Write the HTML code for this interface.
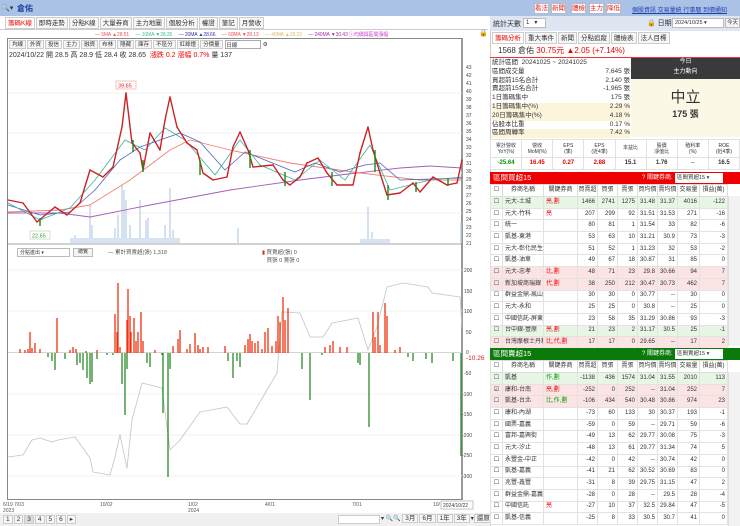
<!DOCTYPE html>
<html><head><meta charset="utf-8"><style>
*{box-sizing:border-box;margin:0;padding:0}
body{width:740px;height:526px;overflow:hidden;background:#fff;font-family:"Liberation Sans","Noto Sans CJK TC",sans-serif;font-size:7px;color:#333;position:relative}
.a{position:absolute}
.btn{position:absolute;border:1px solid #bbb;background:#f4f4f4;font-size:6.5px;text-align:center;line-height:9px;height:11px;white-space:nowrap;overflow:hidden}
.tab{display:inline-block;border:1px solid #ccc;background:#f6f6f6;padding:0 2px;height:12px;line-height:11px;font-size:6.5px;margin-right:1px}
table{border-collapse:collapse;table-layout:fixed}
td{border:1px solid #e2e2e2;font-size:6px;height:11.7px;line-height:9px;padding:0 2px;white-space:nowrap;overflow:hidden;text-align:right}
td.n,td.k{text-align:left}
td.c{text-align:center}
tr.g td{background:#e8f6e6}tr.p td{background:#fde4e4}
th{border:1px solid #ddd;font-size:6px;font-weight:normal;height:12px;line-height:9px;background:#fff;overflow:hidden;white-space:nowrap}
.r{color:#e00}.gr{color:#090}
</style></head><body>
<div class="a" style="left:0;top:0;width:490px;height:16px;background:#a9c2e6"></div>
<div class="a" style="left:1px;top:4px;font-size:7px">🔍▾</div>
<div class="a" style="left:17px;top:3px;font-size:8px;color:#1c3fa0;font-weight:bold">倉佑</div>
<div class="a" style="left:5px;top:17px;white-space:nowrap"><span class="tab" style="color:#e00;background:#fff">籌碼K線</span><span class="tab">即時走勢</span><span class="tab">分點K線</span><span class="tab">大量券商</span><span class="tab">主力地圖</span><span class="tab">個股分析</span><span class="tab">權證</span><span class="tab">筆記</span><span class="tab">月營收</span></div>
<div class="a" style="left:0;top:29px;width:488px;height:1px;background:#ccc"></div>
<div class="a" style="left:95px;top:31px;font-size:5px;white-space:nowrap;letter-spacing:-.1px"><span style="color:#e55">— 5MA ▲28.51</span>&nbsp;&nbsp;&nbsp;&nbsp;&nbsp;<span style="color:#4b9">— 10MA ▼28.35</span>&nbsp;&nbsp;&nbsp;&nbsp;&nbsp;<span style="color:#33a">— 20MA ▲28.66</span>&nbsp;&nbsp;&nbsp;&nbsp;&nbsp;<span style="color:#e55">— 60MA ▼28.13</span>&nbsp;&nbsp;&nbsp;&nbsp;&nbsp;<span style="color:#db6">— 40MA ▲28.23</span>&nbsp;&nbsp;&nbsp;&nbsp;&nbsp;<span style="color:#a3a">— 240MA ▼30.43</span> <span style="color:#c3c">ⓘ均價與區間漲幅</span></div>
<div class="a" style="left:479px;top:29px;font-size:7px">🔒</div>
<div class="a" style="left:7px;top:38px;width:456px;height:462px;border:1px solid #888;border-right:2px solid #999"></div>
<div class="a" style="left:9px;top:40px;white-space:nowrap;font-size:5.5px"><span class="tab" style="height:9px;line-height:8px;font-size:5.5px">均線</span><span class="tab" style="height:9px;line-height:8px;font-size:5.5px">外資</span><span class="tab" style="height:9px;line-height:8px;font-size:5.5px">投信</span><span class="tab" style="height:9px;line-height:8px;font-size:5.5px">主力</span><span class="tab" style="height:9px;line-height:8px;font-size:5.5px">融資</span><span class="tab" style="height:9px;line-height:8px;font-size:5.5px">布林</span><span class="tab" style="height:9px;line-height:8px;font-size:5.5px">隱藏</span><span class="tab" style="height:9px;line-height:8px;font-size:5.5px">庫存</span><span class="tab" style="height:9px;line-height:8px;font-size:5.5px">不區分</span><span class="tab" style="height:9px;line-height:8px;font-size:5.5px">紅綠燈</span><span class="tab" style="height:9px;line-height:8px;font-size:5.5px">分價量</span> <span style="display:inline-block;border:1px solid #aaa;width:36px;height:9px;vertical-align:top">日線</span> ⚙</div>
<div class="a" style="left:9px;top:50px;font-size:7px;white-space:nowrap">2024/10/22 開 28.5 高 28.9 低 28.4 收 28.65 &nbsp;<span class="r">漲跌 0.2 漲幅 0.7%</span> 量 137</div>
<svg class="a" style="left:0;top:0" width="490" height="526">
<g stroke="#f0f0f0" stroke-width="1"><line x1="8" y1="93" x2="462" y2="93"/><line x1="8" y1="133" x2="462" y2="133"/><line x1="8" y1="173" x2="462" y2="173"/><line x1="8" y1="213" x2="462" y2="213"/><line x1="8" y1="270" x2="462" y2="270"/><line x1="8" y1="311" x2="462" y2="311"/><line x1="8" y1="394" x2="462" y2="394"/><line x1="8" y1="435" x2="462" y2="435"/><line x1="8" y1="476" x2="462" y2="476"/></g>
<g stroke="#b8cde6" stroke-width="1.2">
<line x1="75" y1="243" x2="75" y2="235"/><line x1="90" y1="243" x2="90" y2="205"/><line x1="92" y1="243" x2="92" y2="225"/><line x1="115" y1="243" x2="115" y2="228"/><line x1="118" y1="243" x2="118" y2="215"/><line x1="122" y1="243" x2="122" y2="185"/><line x1="124" y1="243" x2="124" y2="190"/><line x1="126" y1="243" x2="126" y2="200"/><line x1="130" y1="243" x2="130" y2="225"/><line x1="140" y1="243" x2="140" y2="200"/><line x1="146" y1="243" x2="146" y2="220"/><line x1="148" y1="243" x2="148" y2="218"/><line x1="165" y1="243" x2="165" y2="225"/><line x1="170" y1="243" x2="170" y2="188"/><line x1="173" y1="243" x2="173" y2="230"/><line x1="238" y1="243" x2="238" y2="228"/><line x1="368" y1="243" x2="368" y2="207"/><line x1="372" y1="243" x2="372" y2="232"/><line x1="461" y1="243" x2="461" y2="222"/>
</g>
<rect x="70" y="238" width="110" height="5" fill="#d6e3f2"/><rect x="360" y="239" width="30" height="4" fill="#d6e3f2"/>
<g stroke="#a35fb8" stroke-width="0.9" stroke-linecap="round">
<line x1="8" y1="213" x2="60" y2="213"/><line x1="60" y1="213" x2="90" y2="217"/><line x1="90" y1="217" x2="150" y2="205"/><line x1="150" y1="205" x2="230" y2="190"/><line x1="230" y1="190" x2="300" y2="180"/><line x1="300" y1="180" x2="340" y2="175"/><line x1="340" y1="175" x2="400" y2="168"/><line x1="400" y1="168" x2="430" y2="166"/><line x1="430" y1="166" x2="462" y2="168"/>
</g>
<g stroke="#f08070" stroke-width="0.9" stroke-linecap="round">
<line x1="8" y1="212" x2="60" y2="210"/><line x1="60" y1="210" x2="90" y2="205"/><line x1="90" y1="205" x2="130" y2="180"/><line x1="130" y1="180" x2="170" y2="150"/><line x1="170" y1="150" x2="190" y2="140"/><line x1="190" y1="140" x2="230" y2="150"/><line x1="230" y1="150" x2="290" y2="163"/><line x1="290" y1="163" x2="360" y2="173"/><line x1="360" y1="173" x2="420" y2="180"/><line x1="420" y1="180" x2="462" y2="180"/>
</g>
<g stroke="#5060c0" stroke-width="0.8" stroke-linecap="round">
<line x1="8" y1="205" x2="40" y2="215"/><line x1="40" y1="215" x2="70" y2="212"/><line x1="70" y1="212" x2="95" y2="190"/><line x1="95" y1="190" x2="120" y2="160"/><line x1="120" y1="160" x2="140" y2="147"/><line x1="140" y1="147" x2="160" y2="140"/><line x1="160" y1="140" x2="180" y2="133"/><line x1="180" y1="133" x2="200" y2="142"/><line x1="200" y1="142" x2="225" y2="170"/><line x1="225" y1="170" x2="245" y2="152"/><line x1="245" y1="152" x2="270" y2="162"/><line x1="270" y1="162" x2="295" y2="172"/><line x1="295" y1="172" x2="315" y2="163"/><line x1="315" y1="163" x2="340" y2="172"/><line x1="340" y1="172" x2="365" y2="165"/><line x1="365" y1="165" x2="380" y2="163"/><line x1="380" y1="163" x2="400" y2="180"/><line x1="400" y1="180" x2="462" y2="178"/>
</g>
<g stroke="#40b0a0" stroke-width="0.8" stroke-linecap="round">
<line x1="8" y1="203" x2="40" y2="220"/><line x1="40" y1="220" x2="70" y2="208"/><line x1="70" y1="208" x2="95" y2="180"/><line x1="95" y1="180" x2="125" y2="140"/><line x1="125" y1="140" x2="145" y2="150"/><line x1="145" y1="150" x2="165" y2="128"/><line x1="165" y1="128" x2="185" y2="140"/><line x1="185" y1="140" x2="215" y2="175"/><line x1="215" y1="175" x2="240" y2="140"/><line x1="240" y1="140" x2="260" y2="165"/><line x1="260" y1="165" x2="295" y2="180"/><line x1="295" y1="180" x2="320" y2="160"/><line x1="320" y1="160" x2="345" y2="180"/><line x1="345" y1="180" x2="370" y2="145"/><line x1="370" y1="145" x2="390" y2="190"/><line x1="390" y1="190" x2="430" y2="180"/><line x1="430" y1="180" x2="462" y2="177"/>
</g>
<g stroke="#c22" stroke-width="1.4" stroke-linecap="round">
<line x1="8" y1="200" x2="23" y2="203"/><line x1="23" y1="203" x2="37" y2="222"/><line x1="37" y1="222" x2="55" y2="207"/><line x1="55" y1="207" x2="67" y2="215"/><line x1="67" y1="215" x2="80" y2="203"/><line x1="80" y1="203" x2="90" y2="170"/><line x1="90" y1="170" x2="103" y2="177"/><line x1="103" y1="177" x2="113" y2="167"/><line x1="113" y1="167" x2="122" y2="127"/><line x1="122" y1="127" x2="126" y2="93"/><line x1="126" y1="93" x2="132" y2="143"/><line x1="132" y1="143" x2="140" y2="153"/><line x1="140" y1="153" x2="143" y2="170"/><line x1="143" y1="170" x2="150" y2="133"/><line x1="150" y1="133" x2="160" y2="150"/><line x1="160" y1="150" x2="165" y2="120"/><line x1="165" y1="120" x2="170" y2="97"/><line x1="170" y1="97" x2="177" y2="127"/><line x1="177" y1="127" x2="187" y2="143"/><line x1="187" y1="143" x2="197" y2="150"/><line x1="197" y1="150" x2="203" y2="173"/><line x1="203" y1="173" x2="213" y2="180"/><line x1="213" y1="180" x2="227" y2="177"/><line x1="227" y1="177" x2="233" y2="147"/><line x1="233" y1="147" x2="240" y2="132"/><line x1="240" y1="132" x2="248" y2="150"/><line x1="248" y1="150" x2="253" y2="167"/><line x1="253" y1="167" x2="273" y2="165"/><line x1="273" y1="165" x2="283" y2="180"/><line x1="283" y1="180" x2="290" y2="185"/><line x1="290" y1="185" x2="300" y2="177"/><line x1="300" y1="177" x2="307" y2="163"/><line x1="307" y1="163" x2="318" y2="158"/><line x1="318" y1="158" x2="327" y2="173"/><line x1="327" y1="173" x2="337" y2="185"/><line x1="337" y1="185" x2="353" y2="185"/><line x1="353" y1="185" x2="360" y2="153"/><line x1="360" y1="153" x2="368" y2="127"/><line x1="368" y1="127" x2="373" y2="150"/><line x1="373" y1="150" x2="380" y2="173"/><line x1="380" y1="173" x2="387" y2="195"/><line x1="387" y1="195" x2="400" y2="193"/><line x1="400" y1="193" x2="413" y2="183"/><line x1="413" y1="183" x2="420" y2="192"/><line x1="420" y1="192" x2="433" y2="177"/><line x1="433" y1="177" x2="447" y2="185"/><line x1="447" y1="185" x2="457" y2="183"/><line x1="457" y1="183" x2="462" y2="160"/>
</g>
<g stroke="#1a8a1a" stroke-width="1.4">
<line x1="40" y1="218" x2="40" y2="226"/><line x1="133" y1="140" x2="133" y2="152"/><line x1="143" y1="160" x2="143" y2="172"/><line x1="200" y1="160" x2="200" y2="175"/><line x1="250" y1="150" x2="250" y2="168"/><line x1="285" y1="172" x2="285" y2="186"/><line x1="332" y1="172" x2="332" y2="186"/><line x1="375" y1="150" x2="375" y2="172"/><line x1="388" y1="185" x2="388" y2="200"/><line x1="416" y1="182" x2="416" y2="192"/><line x1="448" y1="178" x2="448" y2="186"/>
</g>
<rect x="116" y="81" width="20" height="8" fill="#fff" stroke="#e88" stroke-width=".5"/><text x="118" y="87.5" font-size="5.5" fill="#e22">39.85</text>
<rect x="30" y="231" width="20" height="8" fill="#fff" stroke="#9c9" stroke-width=".5"/><text x="32" y="237.5" font-size="5.5" fill="#393">22.65</text>
<g font-size="5" fill="#444">
<text x="466" y="69">43</text><text x="466" y="77">42</text><text x="466" y="85">41</text><text x="466" y="93">40</text><text x="466" y="101">39</text><text x="466" y="109">38</text><text x="466" y="117">37</text><text x="466" y="125">36</text><text x="466" y="133">35</text><text x="466" y="141">34</text><text x="466" y="149">33</text><text x="466" y="157">32</text><text x="466" y="165">31</text><text x="466" y="173">30</text><text x="466" y="181">29</text><text x="466" y="189">28</text><text x="466" y="197">27</text><text x="466" y="205">26</text><text x="466" y="213">25</text><text x="466" y="221">24</text><text x="466" y="229">23</text><text x="466" y="237">22</text><text x="466" y="245">21</text>
<text x="464" y="272">200</text><text x="464" y="293">150</text><text x="464" y="313">100</text><text x="466" y="334">50</text><text x="466" y="354">0</text><text x="464" y="375">-50</text><text x="462" y="396">-100</text><text x="462" y="416">-150</text><text x="462" y="437">-200</text><text x="462" y="457">-250</text><text x="462" y="478">-300</text>
</g>
<text x="466" y="360" font-size="6.5" fill="#c22">-10.26</text>
<line x1="8" y1="244" x2="462" y2="244" stroke="#888" stroke-width=".8"/>
<line x1="8" y1="352.7" x2="462" y2="352.7" stroke="#bbb" stroke-width=".6"/>
<g stroke="#c4c4c4" stroke-width="0.8" stroke-linecap="round">
<line x1="8" y1="457" x2="23" y2="455"/><line x1="23" y1="455" x2="32" y2="440"/><line x1="32" y1="440" x2="40" y2="438"/><line x1="40" y1="438" x2="52" y2="442"/><line x1="52" y1="442" x2="58" y2="440"/><line x1="58" y1="440" x2="75" y2="437"/><line x1="75" y1="437" x2="90" y2="458"/><line x1="90" y1="458" x2="93" y2="472"/><line x1="93" y1="472" x2="110" y2="475"/><line x1="110" y1="475" x2="115" y2="457"/><line x1="115" y1="457" x2="120" y2="435"/><line x1="120" y1="435" x2="127" y2="468"/><line x1="127" y1="468" x2="132" y2="420"/><line x1="132" y1="420" x2="142" y2="383"/><line x1="142" y1="383" x2="162" y2="388"/><line x1="162" y1="388" x2="170" y2="450"/><line x1="170" y1="450" x2="180" y2="440"/><line x1="180" y1="440" x2="200" y2="412"/><line x1="200" y1="412" x2="227" y2="407"/><line x1="227" y1="407" x2="240" y2="424"/><line x1="240" y1="424" x2="247" y2="424"/><line x1="247" y1="424" x2="267" y2="390"/><line x1="267" y1="390" x2="277" y2="373"/><line x1="277" y1="373" x2="282" y2="312"/><line x1="282" y1="312" x2="300" y2="313"/><line x1="300" y1="313" x2="310" y2="337"/><line x1="310" y1="337" x2="323" y2="337"/><line x1="323" y1="337" x2="332" y2="323"/><line x1="332" y1="323" x2="358" y2="318"/><line x1="358" y1="318" x2="368" y2="350"/><line x1="368" y1="350" x2="377" y2="327"/><line x1="377" y1="327" x2="387" y2="287"/><line x1="387" y1="287" x2="403" y2="283"/><line x1="403" y1="283" x2="428" y2="287"/><line x1="428" y1="287" x2="432" y2="293"/><line x1="432" y1="293" x2="460" y2="297"/><line x1="460" y1="297" x2="462" y2="327"/>
</g>
<g stroke="#e31" stroke-width="1.3">
<line x1="20" x2="20" y1="353" y2="349"/><line x1="25" x2="25" y1="353" y2="350"/><line x1="28" x2="28" y1="353" y2="349"/><line x1="30" x2="30" y1="353" y2="332"/><line x1="32" x2="32" y1="353" y2="348"/><line x1="35" x2="35" y1="353" y2="343"/><line x1="40" x2="40" y1="353" y2="349"/><line x1="57" x2="57" y1="353" y2="318"/><line x1="70" x2="70" y1="353" y2="350"/><line x1="73" x2="73" y1="353" y2="347"/><line x1="76" x2="76" y1="353" y2="349"/><line x1="86" x2="86" y1="353" y2="351"/><line x1="97" x2="97" y1="353" y2="350"/><line x1="115" x2="115" y1="353" y2="314"/><line x1="117" x2="117" y1="353" y2="332"/><line x1="118" x2="118" y1="353" y2="283"/><line x1="120" x2="120" y1="353" y2="347"/><line x1="127" x2="127" y1="353" y2="320"/><line x1="128" x2="128" y1="353" y2="289"/><line x1="130" x2="130" y1="353" y2="316"/><line x1="131" x2="131" y1="353" y2="332"/><line x1="134" x2="134" y1="353" y2="318"/><line x1="136" x2="136" y1="353" y2="341"/><line x1="138" x2="138" y1="353" y2="332"/><line x1="141" x2="141" y1="353" y2="312"/><line x1="143" x2="143" y1="353" y2="341"/><line x1="155" x2="155" y1="353" y2="350"/><line x1="173" x2="173" y1="353" y2="346"/><line x1="178" x2="178" y1="353" y2="339"/><line x1="180" x2="180" y1="353" y2="330"/><line x1="187" x2="187" y1="353" y2="349"/><line x1="190" x2="190" y1="353" y2="344"/><line x1="195" x2="195" y1="353" y2="333"/><line x1="198" x2="198" y1="353" y2="345"/><line x1="200" x2="200" y1="353" y2="349"/><line x1="203" x2="203" y1="353" y2="347"/><line x1="208" x2="208" y1="353" y2="347"/><line x1="225" x2="225" y1="353" y2="346"/><line x1="245" x2="245" y1="353" y2="345"/><line x1="248" x2="248" y1="353" y2="339"/><line x1="250" x2="250" y1="353" y2="334"/><line x1="252" x2="252" y1="353" y2="341"/><line x1="255" x2="255" y1="353" y2="343"/><line x1="258" x2="258" y1="353" y2="341"/><line x1="262" x2="262" y1="353" y2="349"/><line x1="265" x2="265" y1="353" y2="332"/><line x1="268" x2="268" y1="353" y2="328"/><line x1="272" x2="272" y1="353" y2="346"/><line x1="276" x2="276" y1="353" y2="341"/><line x1="278" x2="278" y1="353" y2="316"/><line x1="280" x2="280" y1="353" y2="322"/><line x1="283" x2="283" y1="353" y2="297"/><line x1="285" x2="285" y1="353" y2="320"/><line x1="288" x2="288" y1="353" y2="308"/><line x1="325" x2="325" y1="353" y2="347"/><line x1="330" x2="330" y1="353" y2="345"/><line x1="333" x2="333" y1="353" y2="341"/><line x1="340" x2="340" y1="353" y2="347"/><line x1="347" x2="347" y1="353" y2="347"/><line x1="373" x2="373" y1="353" y2="312"/><line x1="375" x2="375" y1="353" y2="337"/><line x1="378" x2="378" y1="353" y2="312"/><line x1="380" x2="380" y1="353" y2="345"/><line x1="385" x2="385" y1="353" y2="303"/><line x1="387" x2="387" y1="353" y2="316"/><line x1="395" x2="395" y1="353" y2="350"/><line x1="400" x2="400" y1="353" y2="347"/>
</g>
<g stroke="#2a8a2a" stroke-width="1.3">
<line x1="48" x2="48" y1="353" y2="357"/><line x1="52" x2="52" y1="353" y2="361"/><line x1="55" x2="55" y1="353" y2="370"/><line x1="65" x2="65" y1="353" y2="359"/><line x1="77" x2="77" y1="353" y2="365"/><line x1="80" x2="80" y1="353" y2="363"/><line x1="83" x2="83" y1="353" y2="370"/><line x1="87" x2="87" y1="353" y2="378"/><line x1="90" x2="90" y1="353" y2="384"/><line x1="92" x2="92" y1="353" y2="382"/><line x1="97" x2="97" y1="353" y2="359"/><line x1="107" x2="107" y1="353" y2="355"/><line x1="113" x2="113" y1="353" y2="355"/><line x1="122" x2="122" y1="353" y2="384"/><line x1="125" x2="125" y1="353" y2="415"/><line x1="127" x2="127" y1="353" y2="369"/><line x1="147" x2="147" y1="353" y2="363"/><line x1="150" x2="150" y1="353" y2="367"/><line x1="162" x2="162" y1="353" y2="355"/><line x1="163" x2="163" y1="353" y2="413"/><line x1="168" x2="168" y1="353" y2="477"/><line x1="170" x2="170" y1="353" y2="369"/><line x1="228" x2="228" y1="353" y2="361"/><line x1="233" x2="233" y1="353" y2="378"/><line x1="237" x2="237" y1="353" y2="361"/><line x1="240" x2="240" y1="353" y2="367"/><line x1="302" x2="302" y1="353" y2="369"/><line x1="310" x2="310" y1="353" y2="400"/><line x1="322" x2="322" y1="353" y2="355"/><line x1="358" x2="358" y1="353" y2="363"/><line x1="360" x2="360" y1="353" y2="365"/><line x1="369" x2="369" y1="353" y2="427"/><line x1="408" x2="408" y1="353" y2="357"/><line x1="413" x2="413" y1="353" y2="361"/><line x1="426" x2="426" y1="353" y2="359"/><line x1="432" x2="432" y1="353" y2="363"/><line x1="453" x2="453" y1="353" y2="361"/><line x1="461" x2="461" y1="353" y2="456"/>
</g>
<g font-size="5" fill="#555"><text x="3" y="506">6/19 7/03</text><text x="3" y="512">2023</text><text x="100" y="506">10/02</text><text x="188" y="506">1/02</text><text x="188" y="512">2024</text><text x="265" y="506">4/01</text><text x="352" y="506">7/01</text><text x="433" y="506">10/</text></g>
<rect x="441" y="501" width="32" height="8" fill="#fff" stroke="#888" stroke-width=".5"/><text x="443" y="507" font-size="5" fill="#333">2024/10/22</text>
</svg>
<div class="a" style="left:17px;top:248px;width:53px;height:9px;border:1px solid #bbb;font-size:5px;line-height:8px;padding-left:2px">分點進出 ▾</div>
<div class="btn" style="left:73px;top:248px;width:20px;height:9px;line-height:7px;font-size:5px">總覽</div>
<div class="a" style="left:108px;top:248px;font-size:5.5px;color:#555">— 累計買賣超(張) 1,318</div>
<div class="a" style="left:262px;top:248px;font-size:5.5px;color:#555"><span style="color:#e22">▮</span> 買賣超(張) 0<br>&nbsp;&nbsp;&nbsp;買張 0 賣張 0</div>
<div class="a" style="left:0;top:513px;width:490px;height:13px;background:#f0f0f0"></div>
<div class="a" style="left:3px;top:515px;font-size:6px;white-space:nowrap"><span class="tab" style="height:9px;line-height:8px">1</span><span class="tab" style="height:9px;line-height:8px">2</span><span class="tab" style="height:9px;line-height:8px;background:#ddd">3</span><span class="tab" style="height:9px;line-height:8px">4</span><span class="tab" style="height:9px;line-height:8px">5</span><span class="tab" style="height:9px;line-height:8px">6</span><span class="tab" style="height:9px;line-height:8px">▸</span></div>
<div class="a" style="left:338px;top:515px;width:42px;height:9px;border:1px solid #ccc;background:#fff"></div>
<div class="a" style="left:381px;top:514px;font-size:6px;white-space:nowrap">▾ 🔍🔍 <span class="tab" style="height:9px;line-height:8px">3月</span><span class="tab" style="height:9px;line-height:8px">6月</span><span class="tab" style="height:9px;line-height:8px">1年</span><span class="tab" style="height:9px;line-height:8px">3年</span>▾<span class="tab" style="height:9px;line-height:8px">還原</span></div>
<div class="a" style="left:490px;top:0;width:250px;height:526px;background:#fff;border-left:1px solid #ccc"></div>
<div class="a" style="left:490px;top:0;width:250px;height:16px;background:#a9c2e6"></div>
<div class="btn" style="left:534px;top:3px;width:15px;color:#d22;background:#fff">看法</div><div class="btn" style="left:551px;top:3px;width:15px;color:#d22;background:#fff">新聞</div><div class="btn" style="left:571px;top:3px;width:15px;color:#d22;background:#fff">體檢</div><div class="btn" style="left:589px;top:3px;width:15px;color:#d22;background:#fff">主力</div><div class="btn" style="left:606px;top:3px;width:15px;color:#d22;background:#fff">降低</div>
<div class="a" style="left:632px;top:5px;font-size:6px;color:#2340b0;text-decoration:underline;white-space:nowrap">個股資訊 交易量統 行事曆 到價通知</div>
<div class="a" style="left:490px;top:16px;width:250px;height:15px;background:#dde6f2"></div>
<div class="a" style="left:493px;top:19px;font-size:7px">統計天數</div>
<div class="a" style="left:523px;top:18px;width:23px;height:10px;border:1px solid #bbb;background:#fff;font-size:6px;padding-left:2px;white-space:nowrap">1 &nbsp;&nbsp;▾</div>
<div class="a" style="left:647px;top:18px;font-size:7px;white-space:nowrap">🔒 日期</div>
<div class="a" style="left:672px;top:18px;width:52px;height:10px;border:1px solid #bbb;background:#fff;font-size:5.5px;padding-left:2px;line-height:9px;white-space:nowrap">2024/10/25 ▾</div>
<div class="btn" style="left:725px;top:18px;width:15px;height:10px;line-height:8px;font-size:5.5px">今天</div>
<div class="a" style="left:492px;top:32px;white-space:nowrap"><span class="tab" style="color:#e00;background:#fff">籌碼分析</span><span class="tab">重大事件</span><span class="tab">新聞</span><span class="tab">分點追蹤</span><span class="tab">體檢表</span><span class="tab">法人目標</span></div>
<div class="a" style="left:498px;top:45px;font-size:8px;white-space:nowrap">1568 倉佑 <span class="r">30.75元 ▲2.05 (+7.14%)</span></div>
<div class="a" style="left:490px;top:57px;width:250px;height:1px;background:#e33"></div>
<div class="a" style="left:492px;top:59px;width:138px;font-size:6.5px;line-height:8.8px">
<div>統計區間 &nbsp;20241025 ~ 20241025</div>
<div>區間成交量<span style="float:right">7,645 張</span></div>
<div>買超前15名合計<span style="float:right">2,140 張</span></div>
<div>賣超前15名合計<span style="float:right">-1,965 張</span></div>
<div>1日籌碼集中<span style="float:right">175 張</span></div>
<div style="background:#fcf5dc">1日籌碼集中(%)<span style="float:right">2.29 %</span></div>
<div style="background:#fcf5dc">20日籌碼集中(%)<span style="float:right">4.18 %</span></div>
<div>佔股本比重<span style="float:right">0.17 %</span></div>
<div style="background:#fcf5dc">區間周轉率<span style="float:right">7.42 %</span></div>
</div>
<div class="a" style="left:631px;top:58px;width:109px;height:21px;background:#3a3a3a;color:#fff;text-align:center;font-size:6px;line-height:9.5px">今日<br>主力動向</div>
<div class="a" style="left:631px;top:79px;width:109px;height:58px;background:#fcf8e6;text-align:center"><div style="font-size:15px;margin-top:7px">中立</div><div style="font-size:9px;font-weight:bold">175 張</div></div>
<div class="a" style="left:490px;top:139px;width:250px;height:31px;font-size:5.5px">
<table style="width:250px"><tr style="height:18px"><td class="c" style="font-size:5px;line-height:6px">累計營收<br>YoY(%)</td><td class="c" style="font-size:5px;line-height:6px">營收<br>MoM(%)</td><td class="c" style="font-size:5px;line-height:6px">EPS<br>(季)</td><td class="c" style="font-size:5px;line-height:6px">EPS<br>(近4季)</td><td class="c" style="font-size:5px">本益比</td><td class="c" style="font-size:5px;line-height:6px">股價<br>淨值比</td><td class="c" style="font-size:5px;line-height:6px">殖利率<br>(%)</td><td class="c" style="font-size:5px;line-height:6px">ROE<br>(近4季)</td></tr>
<tr><td class="c gr" style="font-weight:bold">-25.64</td><td class="c r" style="font-weight:bold">16.45</td><td class="c r" style="font-weight:bold">0.27</td><td class="c r" style="font-weight:bold">2.88</td><td class="c" style="font-weight:bold">15.1</td><td class="c" style="font-weight:bold">1.76</td><td class="c">--</td><td class="c" style="font-weight:bold">16.5</td></tr></table></div>
<div class="a" style="left:490px;top:172px;width:250px;height:12px;background:#e00;color:#fff;font-size:7.5px;padding-left:3px;line-height:12px">區間買超15<span style="position:absolute;left:152px;font-size:6px">? 關鍵券商:</span><span style="position:absolute;left:185px;top:1px;width:48px;height:10px;background:#fff;color:#333;font-size:5.5px;line-height:10px;padding-left:2px">區間買超15 ▾</span></div>
<table class="a" style="left:490px;top:184px;width:237px">
<colgroup><col style="width:12px"><col style="width:41px"><col style="width:34px"><col style="width:20px"><col style="width:20px"><col style="width:20px"><col style="width:20px"><col style="width:20px"><col style="width:22px"><col style="width:28px"></colgroup>
<tr><th>☐</th><th>券商名稱</th><th>關鍵券商</th><th>買賣超</th><th>買張</th><th>賣張</th><th>買均價</th><th>賣均價</th><th>交易量</th><th>損益(萬)</th></tr>
<tr class="g"><td class="c">☐</td><td class="n">元大-土城</td><td class="k r">亮,劃</td><td>1466</td><td>2741</td><td>1275</td><td>31.48</td><td>31.37</td><td>4016</td><td>-122</td></tr>
<tr><td class="c">☐</td><td class="n">元大-竹科</td><td class="k r">亮</td><td>207</td><td>299</td><td>92</td><td>31.51</td><td>31.53</td><td>271</td><td>-16</td></tr>
<tr><td class="c">☐</td><td class="n">統一</td><td></td><td>80</td><td>81</td><td>1</td><td>31.54</td><td>33</td><td>82</td><td>-6</td></tr>
<tr><td class="c">☐</td><td class="n">凱基-東港</td><td></td><td>53</td><td>63</td><td>10</td><td>31.21</td><td>30.9</td><td>73</td><td>-3</td></tr>
<tr><td class="c">☐</td><td class="n">元大-彰化民生</td><td></td><td>51</td><td>52</td><td>1</td><td>31.23</td><td>32</td><td>53</td><td>-2</td></tr>
<tr><td class="c">☐</td><td class="n">凱基-油車</td><td></td><td>49</td><td>67</td><td>18</td><td>30.87</td><td>31</td><td>85</td><td>0</td></tr>
<tr class="p"><td class="c">☐</td><td class="n">元大-忠孝</td><td class="k r">比,劃</td><td>48</td><td>71</td><td>23</td><td>29.8</td><td>30.66</td><td>94</td><td>7</td></tr>
<tr class="p"><td class="c">☐</td><td class="n">新加坡商瑞銀</td><td class="k r">代,劃</td><td>38</td><td>250</td><td>212</td><td>30.47</td><td>30.73</td><td>462</td><td>7</td></tr>
<tr><td class="c">☐</td><td class="n">群益金鼎-鳳山</td><td></td><td>30</td><td>30</td><td>0</td><td>30.77</td><td>--</td><td>30</td><td>0</td></tr>
<tr><td class="c">☐</td><td class="n">元大-永和</td><td></td><td>25</td><td>25</td><td>0</td><td>30.8</td><td>--</td><td>25</td><td>0</td></tr>
<tr><td class="c">☐</td><td class="n">中國信託-屏東</td><td></td><td>23</td><td>58</td><td>35</td><td>31.29</td><td>30.86</td><td>93</td><td>-3</td></tr>
<tr class="g"><td class="c">☐</td><td class="n">台中銀-豐原</td><td class="k r">亮,劃</td><td>21</td><td>23</td><td>2</td><td>31.17</td><td>30.5</td><td>25</td><td>-1</td></tr>
<tr class="p"><td class="c">☐</td><td class="n">台灣摩根士丹利</td><td class="k r">比,代,劃</td><td>17</td><td>17</td><td>0</td><td>29.65</td><td>--</td><td>17</td><td>2</td></tr>
</table>
<div class="a" style="left:728px;top:196px;width:12px;height:150px;background:#f2f2f2;border-left:1px solid #ddd"></div>
<div class="a" style="left:490px;top:348px;width:250px;height:12px;background:#0a7a0a;color:#fff;font-size:7.5px;padding-left:3px;line-height:12px">區間賣超15<span style="position:absolute;left:152px;font-size:6px">? 關鍵券商:</span><span style="position:absolute;left:185px;top:1px;width:48px;height:10px;background:#fff;color:#333;font-size:5.5px;line-height:10px;padding-left:2px">區間賣超15 ▾</span></div>
<table class="a" style="left:490px;top:360px;width:237px">
<colgroup><col style="width:12px"><col style="width:41px"><col style="width:34px"><col style="width:20px"><col style="width:20px"><col style="width:20px"><col style="width:20px"><col style="width:20px"><col style="width:22px"><col style="width:28px"></colgroup>
<tr><th>☐</th><th>券商名稱</th><th>關鍵券商</th><th>買賣超</th><th>買張</th><th>賣張</th><th>買均價</th><th>賣均價</th><th>交易量</th><th>損益(萬)</th></tr>
<tr class="g"><td class="c">☐</td><td class="n">凱基</td><td class="k gr">作,劃</td><td>-1138</td><td>436</td><td>1574</td><td>31.04</td><td>31.55</td><td>2010</td><td>113</td></tr>
<tr class="p"><td class="c">☑</td><td class="n">康和-台南</td><td class="k r">亮,劃</td><td>-252</td><td>0</td><td>252</td><td>--</td><td>31.04</td><td>252</td><td>7</td></tr>
<tr class="p"><td class="c">☐</td><td class="n">凱基-台北</td><td class="k gr">比,作,劃</td><td>-106</td><td>434</td><td>540</td><td>30.48</td><td>30.86</td><td>974</td><td>23</td></tr>
<tr><td class="c">☐</td><td class="n">康和-內湖</td><td></td><td>-73</td><td>60</td><td>133</td><td>30</td><td>30.37</td><td>193</td><td>-1</td></tr>
<tr><td class="c">☐</td><td class="n">國票-嘉義</td><td></td><td>-59</td><td>0</td><td>59</td><td>--</td><td>29.71</td><td>59</td><td>-6</td></tr>
<tr><td class="c">☐</td><td class="n">富邦-嘉興街</td><td></td><td>-49</td><td>13</td><td>62</td><td>29.77</td><td>30.08</td><td>75</td><td>-3</td></tr>
<tr><td class="c">☐</td><td class="n">元大-汐止</td><td></td><td>-48</td><td>13</td><td>61</td><td>29.77</td><td>31.34</td><td>74</td><td>5</td></tr>
<tr><td class="c">☐</td><td class="n">永豐金-中正</td><td></td><td>-42</td><td>0</td><td>42</td><td>--</td><td>30.74</td><td>42</td><td>0</td></tr>
<tr><td class="c">☐</td><td class="n">凱基-嘉義</td><td></td><td>-41</td><td>21</td><td>62</td><td>30.52</td><td>30.69</td><td>83</td><td>0</td></tr>
<tr><td class="c">☐</td><td class="n">兆豐-鑫豐</td><td></td><td>-31</td><td>8</td><td>39</td><td>29.75</td><td>31.15</td><td>47</td><td>2</td></tr>
<tr><td class="c">☐</td><td class="n">群益金鼎-嘉義</td><td></td><td>-28</td><td>0</td><td>28</td><td>--</td><td>29.5</td><td>28</td><td>-4</td></tr>
<tr><td class="c">☐</td><td class="n">中國信託</td><td class="k r">亮</td><td>-27</td><td>10</td><td>37</td><td>32.5</td><td>29.84</td><td>47</td><td>-5</td></tr>
<tr><td class="c">☐</td><td class="n">凱基-信義</td><td></td><td>-25</td><td>8</td><td>33</td><td>30.5</td><td>30.7</td><td>41</td><td>0</td></tr>
</table>
<div class="a" style="left:728px;top:372px;width:12px;height:154px;background:#f2f2f2;border-left:1px solid #ddd"></div>
</body></html>
